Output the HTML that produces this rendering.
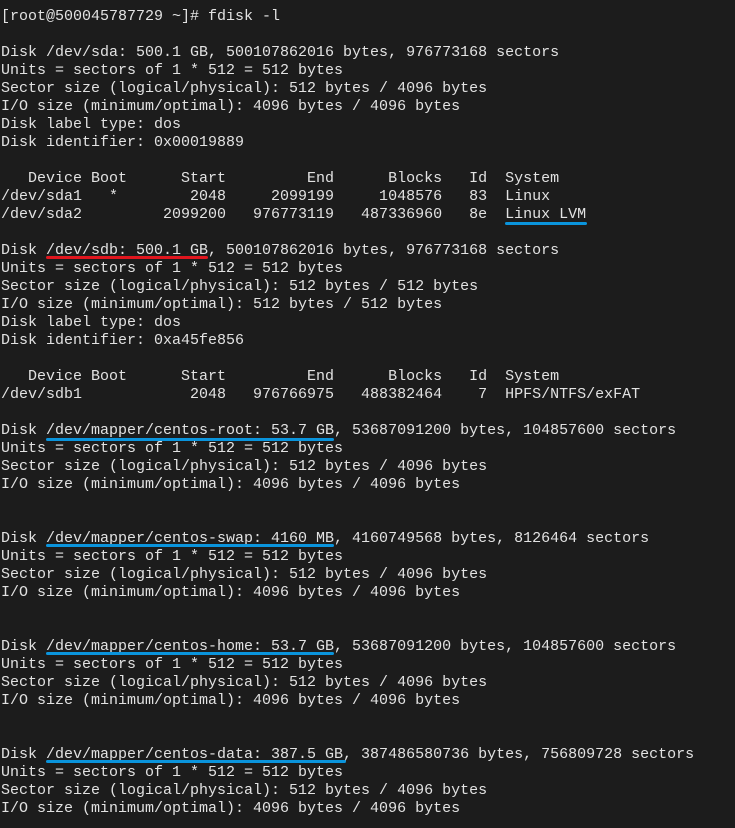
<!DOCTYPE html>
<html><head><meta charset="utf-8"><style>
html,body{margin:0;padding:0;background:#1c1c1c;width:735px;height:828px;overflow:hidden}
pre{position:absolute;left:1px;top:8px;margin:0;font-family:"Liberation Mono",monospace;font-size:15px;line-height:18px;color:#e2e2e2}
.u{position:absolute;height:3px;border-radius:2px;background:#0a94dc}
.r{background:#e0161e}
</style></head><body>
<pre>[root@500045787729 ~]# fdisk -l

Disk /dev/sda: 500.1 GB, 500107862016 bytes, 976773168 sectors
Units = sectors of 1 * 512 = 512 bytes
Sector size (logical/physical): 512 bytes / 4096 bytes
I/O size (minimum/optimal): 4096 bytes / 4096 bytes
Disk label type: dos
Disk identifier: 0x00019889

   Device Boot      Start         End      Blocks   Id  System
/dev/sda1   *        2048     2099199     1048576   83  Linux
/dev/sda2         2099200   976773119   487336960   8e  Linux LVM

Disk /dev/sdb: 500.1 GB, 500107862016 bytes, 976773168 sectors
Units = sectors of 1 * 512 = 512 bytes
Sector size (logical/physical): 512 bytes / 512 bytes
I/O size (minimum/optimal): 512 bytes / 512 bytes
Disk label type: dos
Disk identifier: 0xa45fe856

   Device Boot      Start         End      Blocks   Id  System
/dev/sdb1            2048   976766975   488382464    7  HPFS/NTFS/exFAT

Disk /dev/mapper/centos-root: 53.7 GB, 53687091200 bytes, 104857600 sectors
Units = sectors of 1 * 512 = 512 bytes
Sector size (logical/physical): 512 bytes / 4096 bytes
I/O size (minimum/optimal): 4096 bytes / 4096 bytes


Disk /dev/mapper/centos-swap: 4160 MB, 4160749568 bytes, 8126464 sectors
Units = sectors of 1 * 512 = 512 bytes
Sector size (logical/physical): 512 bytes / 4096 bytes
I/O size (minimum/optimal): 4096 bytes / 4096 bytes


Disk /dev/mapper/centos-home: 53.7 GB, 53687091200 bytes, 104857600 sectors
Units = sectors of 1 * 512 = 512 bytes
Sector size (logical/physical): 512 bytes / 4096 bytes
I/O size (minimum/optimal): 4096 bytes / 4096 bytes


Disk /dev/mapper/centos-data: 387.5 GB, 387486580736 bytes, 756809728 sectors
Units = sectors of 1 * 512 = 512 bytes
Sector size (logical/physical): 512 bytes / 4096 bytes
I/O size (minimum/optimal): 4096 bytes / 4096 bytes</pre>
<div class="u" style="left:505px;top:222px;width:82px"></div>
<div class="u r" style="left:46px;top:256px;width:162px"></div>
<div class="u" style="left:46px;top:438px;width:288px"></div>
<div class="u" style="left:46px;top:544px;width:288px"></div>
<div class="u" style="left:46px;top:652px;width:288px"></div>
<div class="u" style="left:46px;top:760px;width:300px"></div>
</body></html>
